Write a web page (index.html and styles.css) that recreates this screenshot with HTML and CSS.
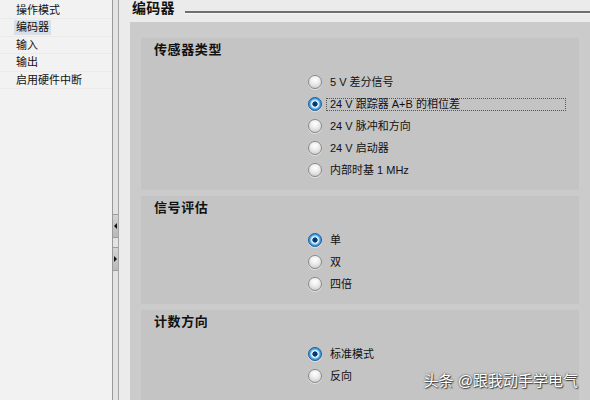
FILE: index.html
```html
<!DOCTYPE html>
<html>
<head>
  <title>编码器</title>
  <link rel="stylesheet" href="styles.css">
</head>
<body>
  <div class="app">
    <aside class="nav">
      <ul>
        <li><span>操作模式</span></li>
        <li><span class="selected">编码器</span></li>
        <li><span>输入</span></li>
        <li><span>输出</span></li>
        <li><span>启用硬件中断</span></li>
      </ul>
    </aside>

    <div class="splitter">
      <div class="split-btn"><i class="arrow-left"></i></div>
      <div class="split-btn"><i class="arrow-right"></i></div>
    </div>

    <main class="main">
      <div class="title-row">
        <h2>编码器</h2>
        <span class="rule"></span>
      </div>

      <div class="panel">
        <section class="group">
          <h3>传感器类型</h3>
          <div class="options">
            <div class="option"><span class="radio"></span><span class="label">5 V 差分信号</span></div>
            <div class="option focus"><span class="radio on"></span><span class="label">24 V 跟踪器 A+B 的相位差</span></div>
            <div class="option"><span class="radio"></span><span class="label">24 V 脉冲和方向</span></div>
            <div class="option"><span class="radio"></span><span class="label">24 V 启动器</span></div>
            <div class="option"><span class="radio"></span><span class="label">内部时基 1 MHz</span></div>
          </div>
        </section>

        <section class="group">
          <h3>信号评估</h3>
          <div class="options">
            <div class="option"><span class="radio on"></span><span class="label">单</span></div>
            <div class="option"><span class="radio"></span><span class="label">双</span></div>
            <div class="option"><span class="radio"></span><span class="label">四倍</span></div>
          </div>
        </section>

        <section class="group last">
          <h3>计数方向</h3>
          <div class="options">
            <div class="option"><span class="radio on"></span><span class="label">标准模式</span></div>
            <div class="option"><span class="radio"></span><span class="label">反向</span></div>
          </div>
        </section>
      </div>
    </main>

    <div class="watermark">头条 @跟我动手学电气</div>
  </div>
</body>
</html>
```

FILE: styles.css
```css
body {
  margin: 0;
  font-family: "Liberation Sans", "Noto Sans CJK SC", sans-serif;
  font-size: 11px;
  color: #111;
}
.app {
  display: flex;
  width: 590px;
  height: 400px;
  overflow: hidden;
  position: relative;
}

/* left tree */
.nav {
  width: 112px;
  background: #f2f2f2;
  padding-top: 2px;
  box-sizing: border-box;
}
.nav ul {
  list-style: none;
  margin: 0;
  padding: 0;
}
.nav li {
  height: 16.4px;
  line-height: 16px;
  padding-left: 14px;
  border-bottom: 1px solid #eaeaea;
}
.nav li span {
  display: inline-block;
  line-height: 13px;
  padding: 1px 2px;
}
.nav .selected {
  background: #d8dfe7;
}

/* splitter */
.splitter {
  width: 5px;
  border-left: 1px solid #9a9a9a;
  border-right: 1px solid #a6a6a6;
  background: #e3e3e3;
  display: flex;
  flex-direction: column;
  gap: 9px;
  padding-top: 214px;
}
.split-btn {
  height: 22px;
  background: linear-gradient(#d4d4d4, #b9b9b9);
  border-top: 1px solid #9c9c9c;
  border-bottom: 1px solid #9c9c9c;
  display: flex;
  align-items: center;
  justify-content: center;
}
.arrow-left {
  width: 0;
  height: 0;
  border-top: 3px solid transparent;
  border-bottom: 3px solid transparent;
  border-right: 3px solid #111;
}
.arrow-right {
  width: 0;
  height: 0;
  border-top: 3px solid transparent;
  border-bottom: 3px solid transparent;
  border-left: 3px solid #111;
}

/* main area */
.main {
  flex: 1;
  background: #ebebeb;
  display: flex;
  flex-direction: column;
}
.title-row {
  display: flex;
  align-items: flex-start;
  height: 22px;
  padding-left: 13px;
}
.title-row h2 {
  margin: 0;
  font-size: 14px;
  line-height: 16px;
  font-weight: bold;
  letter-spacing: 0.3px;
}
.rule {
  flex: 1;
  margin: 11px 0 0 10px;
  border-top: 2px solid #6e6e6e;
  border-bottom: 1px solid #f6f6f6;
}
.panel {
  flex: 1;
  margin-left: 11px;
  background: #cbcbcb;
  padding: 16px 11px 0 11px;
  display: flex;
  flex-direction: column;
  gap: 6px;
}
.group {
  background: #c4c4c4;
  padding: 5px 0 9px 13px;
}
.group.last {
  flex: 1;
}
.group h3 {
  margin: 0;
  font-size: 13px;
  line-height: 14px;
  font-weight: bold;
  letter-spacing: 0.6px;
}
.options {
  margin: 14px 0 0 154px;
}
.option {
  height: 22px;
  display: flex;
  align-items: center;
}
.radio {
  box-sizing: border-box;
  width: 14px;
  height: 14px;
  border-radius: 50%;
  border: 1px solid #8a8a8a;
  background: radial-gradient(circle at 50% 30%, #ffffff 0%, #eeeeee 40%, #c2c2c2 100%);
  box-shadow: 0 1px 0 rgba(255, 255, 255, 0.5);
}
.radio.on {
  border-color: #27598f;
  background: radial-gradient(circle at 50% 50%, #0a3870 0, #0a3870 2.3px, #ffffff 3px, #b5e6ff 3.8px, #45a8ec 5px, #1a64b4 100%);
}
.label {
  margin-left: 4px;
  padding: 0 3px;
  line-height: 11px;
  border: 1px solid transparent;
}
.option.focus .label {
  flex: 1;
  margin-right: 13px;
  border: 1px dotted #555;
}

.watermark {
  position: absolute;
  right: 12px;
  bottom: 10px;
  color: #fff;
  font-size: 15px;
  text-shadow: 0 0 2px rgba(0, 0, 0, 0.8), 1px 1px 1px rgba(0, 0, 0, 0.6);
}
```
